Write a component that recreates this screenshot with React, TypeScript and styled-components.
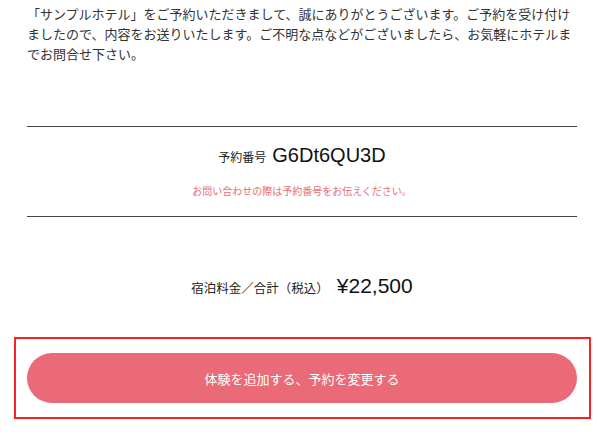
import React from "react";
import styled, { createGlobalStyle } from "styled-components";

const GlobalStyle = createGlobalStyle`
  html, body {
    margin: 0;
    padding: 0;
    background: #ffffff;
  }
  body {
    font-family: "Liberation Sans", "Noto Sans CJK JP", sans-serif;
    color: #333333;
  }
`;

const Page = styled.div`
  width: 598px;
  box-sizing: border-box;
  padding: 5px 21px 0 27px;
  display: flex;
  flex-direction: column;
`;

const Intro = styled.p`
  margin: 0;
  font-size: 13px;
  line-height: 20px;
  color: #333333;
`;

const ReservationBox = styled.section`
  margin-top: 61px;
  border-top: 1px solid #444444;
  border-bottom: 1px solid #444444;
  padding: 16px 0 16px;
  display: flex;
  flex-direction: column;
  align-items: center;
`;

const ValueRow = styled.div<{ $gap?: number }>`
  display: flex;
  align-items: baseline;
  justify-content: center;
  gap: ${(p) => p.$gap ?? 6}px;
  line-height: 24px;
  color: #222222;
`;

const Label = styled.span<{ $size?: number }>`
  font-size: ${(p) => p.$size ?? 12}px;
  font-family: "Noto Sans CJK JP", sans-serif;
`;

const Value = styled.span<{ $size?: number }>`
  font-size: ${(p) => p.$size ?? 20}px;
  font-family: "Liberation Sans", "Noto Sans CJK JP", sans-serif;
  color: #111111;
`;

const Note = styled.p`
  margin: 15px 0 0;
  font-size: 10px;
  line-height: 16px;
  color: #ea6c7b;
`;

const PriceRow = styled(ValueRow)`
  margin-top: 57px;
`;

const Highlight = styled.div`
  margin: 37px -14px 0 -13px;
  border: 2px solid #fb2222;
  padding: 14px 12px 14px 11px;
`;

const ActionButton = styled.button`
  display: flex;
  align-items: center;
  justify-content: center;
  width: 100%;
  height: 50px;
  border: none;
  border-radius: 25px;
  background: #ea6a77;
  color: #ffffff;
  font-family: "Noto Sans CJK JP", sans-serif;
  font-size: 13px;
  padding: 0;
  cursor: pointer;
`;

export default function App() {
  return (
    <>
      <GlobalStyle />
      <Page>
        <Intro>
          「サンプルホテル」をご予約いただきまして、誠にありがとうございます。ご予約を受け付けましたので、内容をお送りいたします。ご不明な点などがございましたら、お気軽にホテルまでお問合せ下さい。
        </Intro>
        <ReservationBox>
          <ValueRow>
            <Label>予約番号</Label>
            <Value>G6Dt6QU3D</Value>
          </ValueRow>
          <Note>お問い合わせの際は予約番号をお伝えください。</Note>
        </ReservationBox>
        <PriceRow $gap={8}>
          <Label $size={12.5}>宿泊料金／合計（税込）</Label>
          <Value $size={21}>¥22,500</Value>
        </PriceRow>
        <Highlight>
          <ActionButton type="button">体験を追加する、予約を変更する</ActionButton>
        </Highlight>
      </Page>
    </>
  );
}
